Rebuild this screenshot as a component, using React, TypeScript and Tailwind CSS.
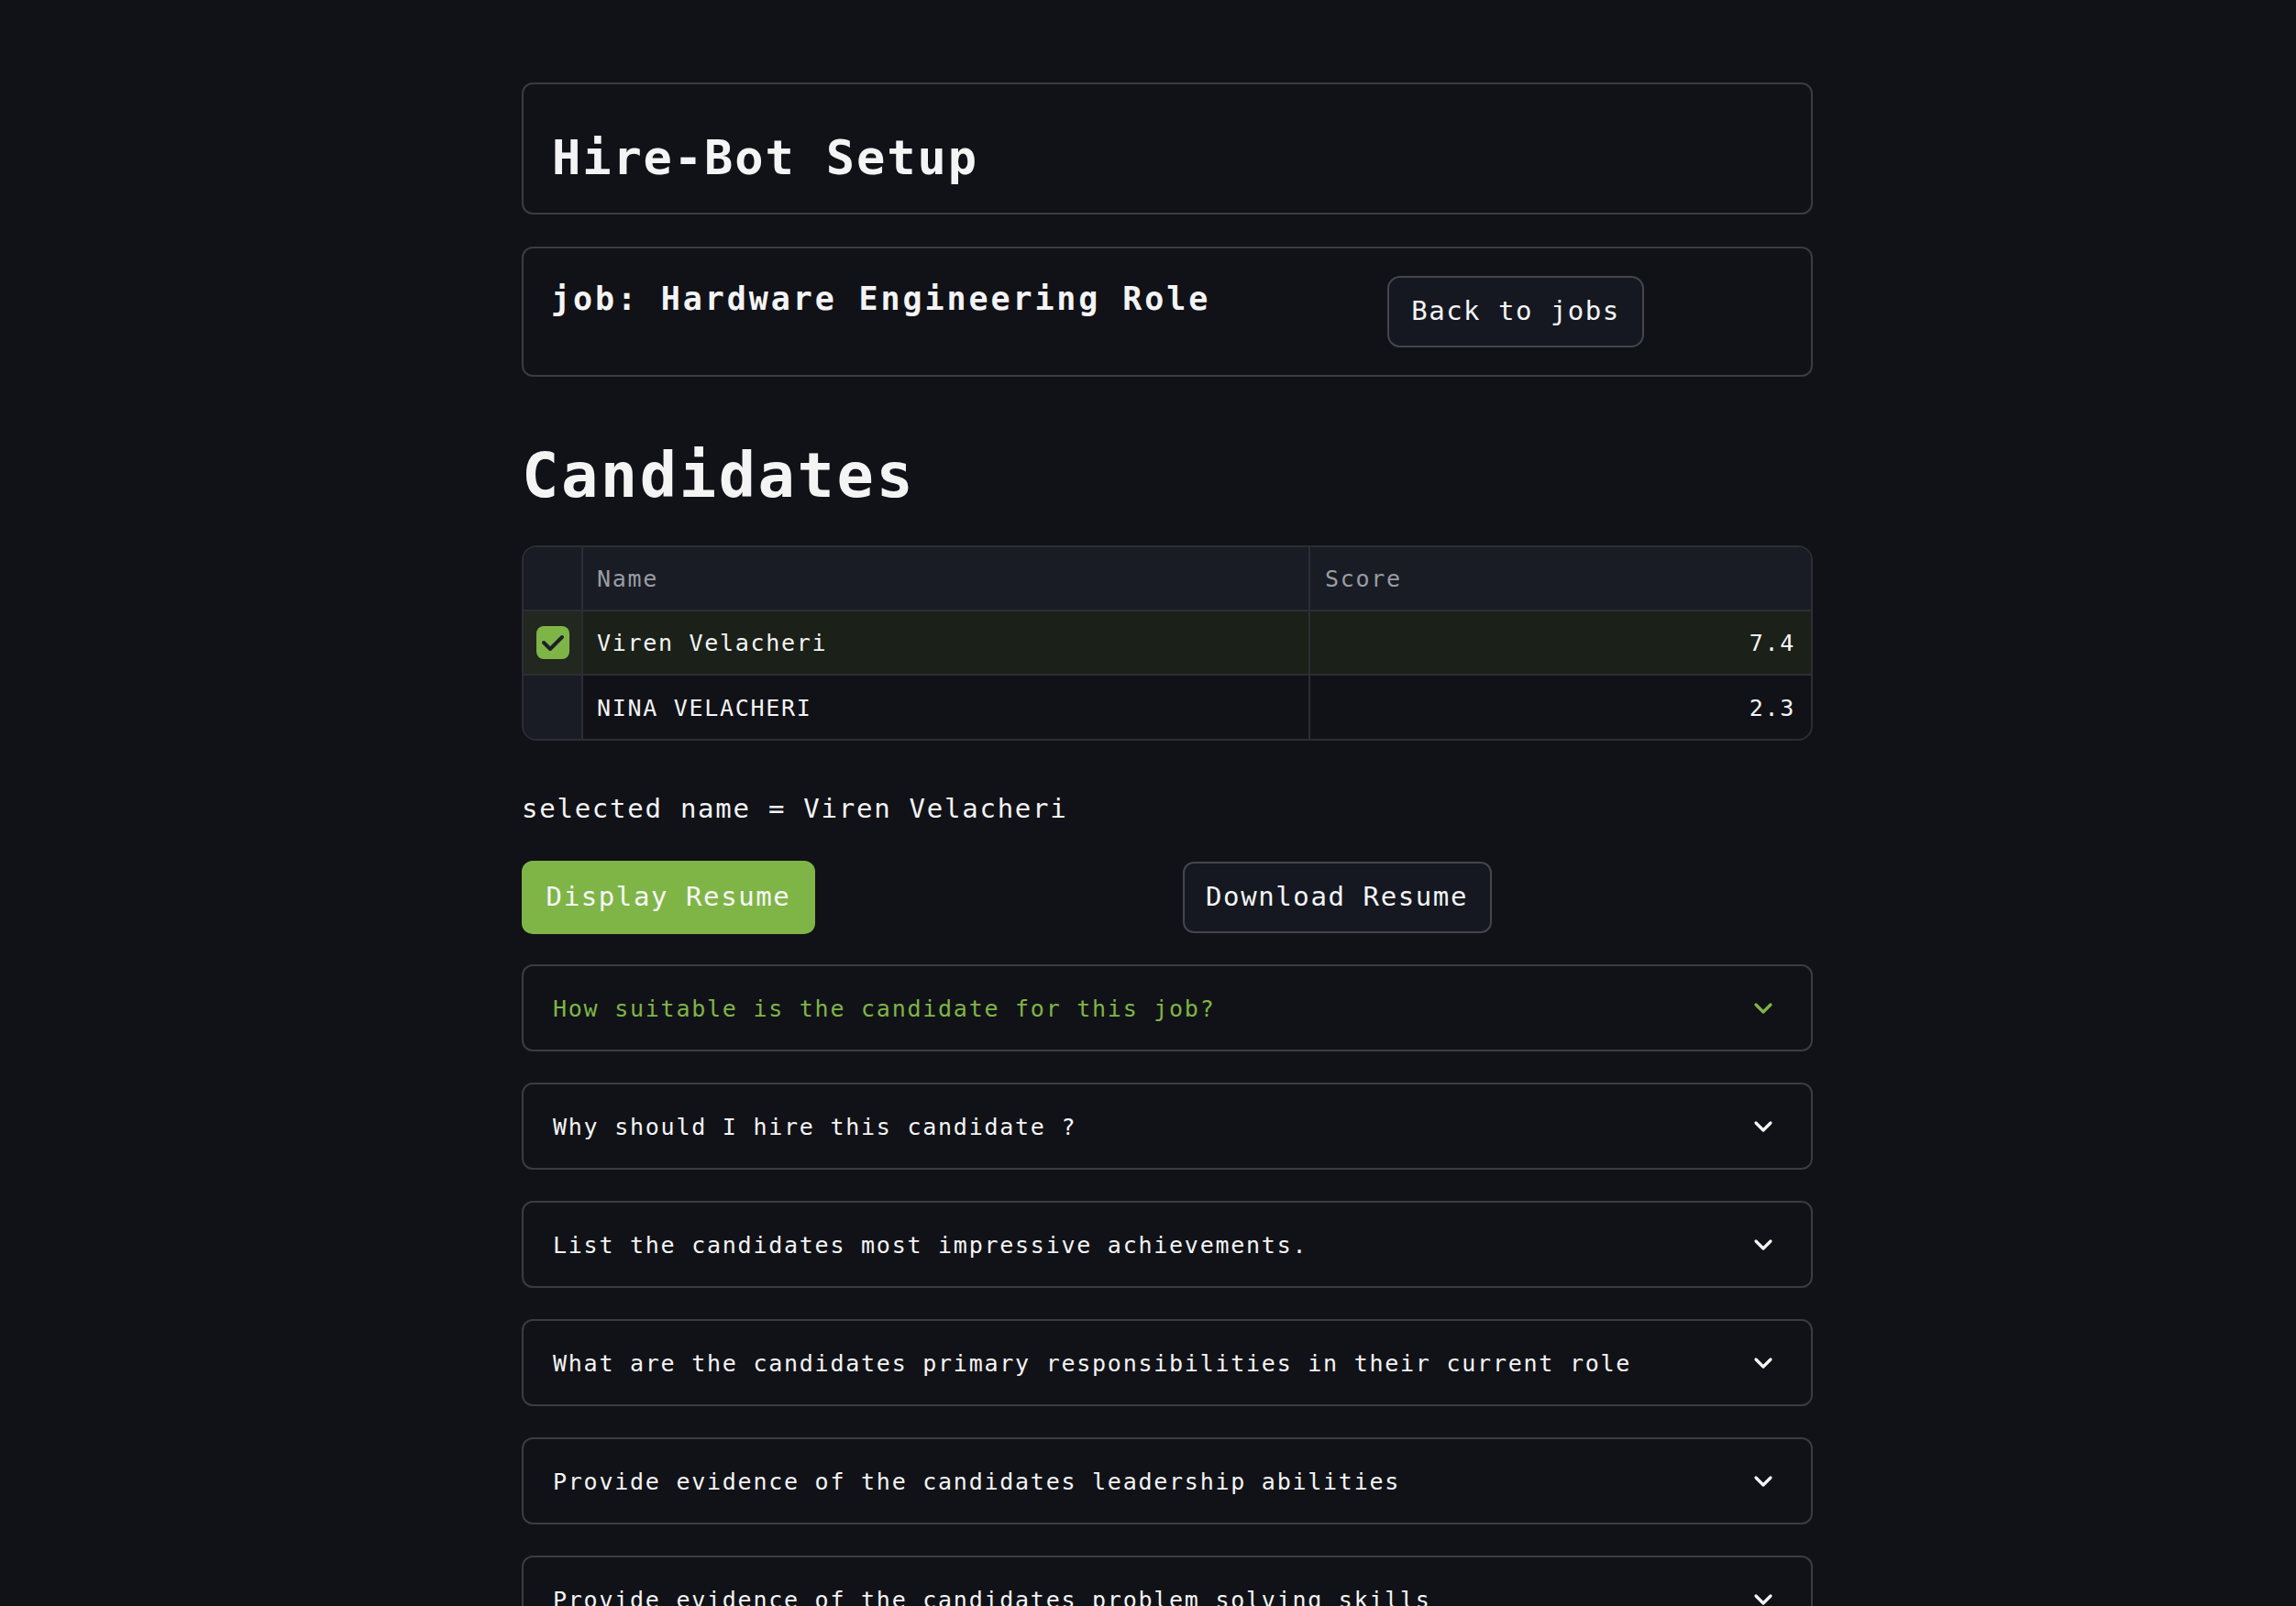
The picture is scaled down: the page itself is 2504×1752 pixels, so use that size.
import { ChevronDown } from "lucide-react";

const questions = [
  "How suitable is the candidate for this job?",
  "Why should I hire this candidate ?",
  "List the candidates most impressive achievements.",
  "What are the candidates primary responsibilities in their current role",
  "Provide evidence of the candidates leadership abilities",
  "Provide evidence of the candidates problem solving skills",
];

const candidates = [
  { name: "Viren Velacheri", score: "7.4", selected: true },
  { name: "NINA VELACHERI", score: "2.3", selected: false },
];

const CheckBox = ({ checked }: { checked: boolean }) => {
  if (!checked) return null;
  return (
    <div className="w-[36px] h-[36px] rounded-[8px] bg-[#7fb547]">
      <svg width="36" height="36" viewBox="0 0 36 36" fill="none">
        <polyline
          points="8,18 15,25 28,12"
          stroke="#1d2127"
          strokeWidth="4"
          strokeLinecap="round"
          strokeLinejoin="round"
        />
      </svg>
    </div>
  );
};

const CandidatesTable = () => {
  return (
    <div className="mt-[42px] rounded-[16px] border-2 border-[#2c2e34] overflow-hidden">
      <div className="grid grid-cols-[65px_793px_1fr] h-[70px] bg-[#191c24] border-b-2 border-[#2c2e34] text-[25px] tracking-[1.7px] text-[#9a9ca3]">
        <div className="border-r-2 border-[#2c2e34]" />
        <div className="border-r-2 border-[#2c2e34] flex items-center pl-[15px] pt-[2px]">Name</div>
        <div className="flex items-center pl-[16px] pt-[2px]">Score</div>
      </div>
      {candidates.map((c, i) => (
        <div
          key={c.name}
          className={
            "grid grid-cols-[65px_793px_1fr] text-[25px] tracking-[1.7px] " +
            (i === 0 ? "h-[70px] border-b-2 border-[#2c2e34] bg-[#1b2019]" : "h-[69px]")
          }
        >
          <div
            className={
              "border-r-2 border-[#2c2e34] flex items-center justify-center " +
              (c.selected ? "bg-[#22271f]" : "bg-[#191c24]")
            }
          >
            <CheckBox checked={c.selected} />
          </div>
          <div className="border-r-2 border-[#2c2e34] flex items-center pl-[15px] pt-[2px]">{c.name}</div>
          <div className="flex items-center justify-end pr-[17px] pt-[2px]">{c.score}</div>
        </div>
      ))}
    </div>
  );
};

export default function App() {
  return (
    <div className="h-[1752px] overflow-hidden bg-[#111217] text-[#f4f4f5] font-['DejaVu_Sans_Mono','Liberation_Mono',monospace]">
      <div className="ml-[569px] w-[1408px] pt-[90px] flex flex-col">
        <div className="h-[144px] rounded-[12px] border-2 border-[#3a3c42] pl-[31px] pt-[54px]">
          <h1 className="text-[52px] tracking-[1.9px] leading-none font-bold">Hire-Bot Setup</h1>
        </div>

        <div className="mt-[35px] h-[142px] rounded-[12px] border-2 border-[#3a3c42] flex items-center pl-[30px]">
          <div className="w-[912px] self-start pt-[38px] text-[35px] tracking-[2.9px] leading-none font-bold">
            job: Hardware Engineering Role
          </div>
          <button className="w-[280px] h-[78px] rounded-[14px] border-2 border-[#44464c] bg-[#151821] text-[29px] tracking-[1.5px] flex items-center justify-center">
            Back to jobs
          </button>
        </div>

        <h2 className="mt-[75px] text-[67px] tracking-[2.6px] leading-none font-bold">Candidates</h2>

        <CandidatesTable />

        <div className="mt-[60px] text-[29px] tracking-[1.75px] leading-none">selected name = Viren Velacheri</div>

        <div className="mt-[42px] grid grid-cols-2 gap-x-[33px]">
          <div>
            <button className="w-[320px] h-[80px] rounded-[12px] bg-[#7fb547] text-[29px] tracking-[1.6px] text-[#f7f7f7] flex items-center justify-center">
              Display Resume
            </button>
          </div>
          <div className="pt-[1px]">
            <button className="w-[337px] h-[78px] rounded-[12px] border-2 border-[#44464c] bg-[#151821] text-[29px] tracking-[1.6px] flex items-center justify-center">
              Download Resume
            </button>
          </div>
        </div>

        <div className="mt-[33px] flex flex-col gap-[34px]">
          {questions.map((q, i) => (
            <div
              key={q}
              className="h-[95px] shrink-0 rounded-[12px] border-2 border-[#3a3c42] flex items-center justify-between pl-[32px] pr-[36px]"
            >
              <span
                className={
                  "text-[25px] tracking-[1.75px] pt-[2px] " + (i === 0 ? "text-[#7fb547]" : "text-[#f4f4f5]")
                }
              >
                {q}
              </span>
              <ChevronDown
                size={32}
                strokeWidth={2.4}
                className={i === 0 ? "text-[#7fb547]" : "text-[#f4f4f5]"}
              />
            </div>
          ))}
        </div>
      </div>
    </div>
  );
}
